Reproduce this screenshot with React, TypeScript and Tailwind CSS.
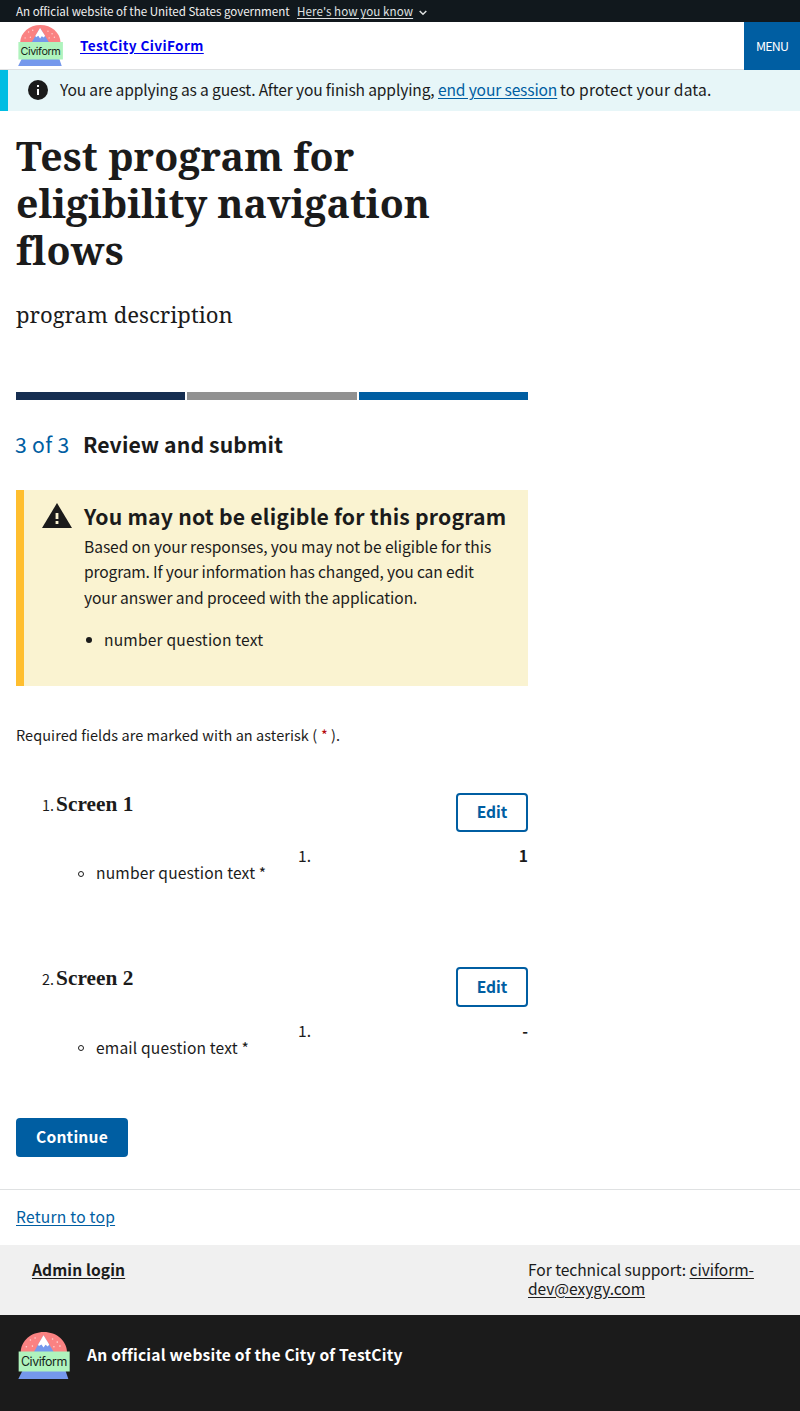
import type { ReactNode } from "react";

function Logo({ className }: { className: string }) {
  return (
    <svg className={className} viewBox="12 12 153 140" aria-label="Civiform">
      <path d="M19 72C20 38 50 12 88 12s68 26 69 60z" fill="#fa8282" />
      <g fill="#fdd5d5">
        <circle cx="48" cy="36" r="2.4" />
        <circle cx="62" cy="30" r="2.4" />
        <circle cx="36" cy="56" r="2.4" />
        <circle cx="54" cy="54" r="2.4" />
        <circle cx="114" cy="33" r="2.4" />
        <circle cx="128" cy="42" r="2.4" />
        <circle cx="136" cy="54" r="2.4" />
        <circle cx="118" cy="56" r="2.4" />
      </g>
      <path d="M87 22l31 50H58z" fill="#7598ec" />
      <path d="M87 22l17 27-4 6-7-5-6 8-6-9-8 5-2-5z" fill="#fff" />
      <path d="M24 128h129l8 24H12z" fill="#7598ec" />
      <path d="M13 70h152v60H13z" fill="#aff3bd" />
      <text
        x="89"
        y="114"
        textAnchor="middle"
        textLength="138"
        fontSize="37"
        fill="#16251a"
        fontFamily="Inter, sans-serif"
      >
        Civiform
      </text>
    </svg>
  );
}

function EditButton() {
  return (
    <button className="flex h-full w-[72px] items-center justify-center rounded-sm border-2 border-[#005ea2] pb-[1px] leading-none font-bold tracking-[-0.05px] text-[#005ea2]">
      Edit
    </button>
  );
}

function Screen({
  number,
  question,
  answer,
}: {
  number: number;
  question: ReactNode;
  answer: string;
}) {
  return (
    <li className="flex h-[174.4px] flex-col">
      <div className="flex h-[39.3px] justify-between">
        <div className="flex items-baseline pl-[26px]">
          <span className="w-[14px] text-[14.4px]">{number}.</span>
          <h3 className="font-['Liberation_Serif',serif] text-[21.3px] leading-[23px] font-bold tracking-[0.05px]">
            Screen {number}
          </h3>
        </div>
        <EditButton />
      </div>
      <div className="mt-[11.1px] flex">
        <div className="flex w-[282px] items-center pt-[17px] pl-[62px] leading-[24px]">
          <span className="mt-[3px] mr-[12px] size-[6px] rounded-full border border-[#1b1b1b]" />
          <span className="tracking-[0.16px]">{question}</span>
        </div>
        <div className="flex flex-1 justify-between leading-[24px]">
          <span>1.</span>
          <span className="font-bold">{answer}</span>
        </div>
      </div>
    </li>
  );
}

export default function App() {
  return (
    <div className="flex h-[1411px] w-[800px] flex-col bg-white font-['Noto_Sans_CJK_SC','Open_Sans',sans-serif] text-[15.6px] whitespace-nowrap text-[#1b1b1b]">
      <div className="flex h-[22px] items-center bg-[#11181d] pl-4 text-[11.6px] leading-[22px] text-[#f0f0f0]">
        <span className="w-[281px] tracking-[-0.03px]">
          An official website of the United States government
        </span>
        <span className="tracking-[0.06px] text-[#dfe1e2] underline underline-offset-2">
          Here's how you know
        </span>
        <svg className="mt-[3px] ml-1.5 h-[6px] w-[8px]" viewBox="0 0 8 6">
          <path d="M.7 1L4 4.3 7.3 1" fill="none" stroke="#dfe1e2" strokeWidth="1.5" />
        </svg>
      </div>

      <header className="flex h-[48px]">
        <div className="flex flex-1 items-center border-b border-[#dfe1e2] pl-[18px]">
          <Logo className="h-[41px] w-[45px]" />
          <a
            href="#home"
            className="mb-[2px] ml-[17px] text-[13.6px] leading-[20px] font-bold tracking-[0.38px] text-[#0000ee] underline underline-offset-2"
          >
            TestCity CiviForm
          </a>
        </div>
        <button className="flex w-[56px] items-center justify-center bg-[#005ea2] text-[12.4px] tracking-[-0.8px] text-white">
          MENU
        </button>
      </header>

      <div className="flex h-[41px] items-center border-l-8 border-[#00bde3] bg-[#e7f6f8] pb-[2px] pl-5 leading-[23px]">
        <svg className="mr-3 size-5" viewBox="0 0 20 20">
          <circle cx="10" cy="10" r="10" fill="#1b1b1b" />
          <path d="M9 5h2v2H9zM9 9h2v6H9z" fill="#fff" />
        </svg>
        <span className="w-[378px] tracking-[-0.15px]">
          You are applying as a guest. After you finish applying,
        </span>
        <a
          href="#end"
          className="w-[122px] tracking-[-0.15px] text-[#005ea2] underline underline-offset-2"
        >
          end your session
        </a>
        <span className="tracking-[0.16px]">to protect your data.</span>
      </div>

      <main className="flex h-[1078px] w-[528px] flex-col pl-4">
        <h1 className="mt-[22px] flex flex-col font-['Noto_Serif','DejaVu_Serif_Condensed',serif] text-[39.3px] leading-[47px] font-bold">
          <span className="tracking-[0.1px]">Test program for</span>
          <span className="tracking-[-0.05px]">eligibility navigation</span>
          <span className="tracking-[0.3px]">flows</span>
        </h1>
        <p className="mt-[25px] font-['Noto_Serif','DejaVu_Serif_Condensed',serif] text-[22.1px] leading-[30px]">
          program description
        </p>

        <div className="mt-[63px] grid h-2 shrink-0 grid-cols-3 gap-[2px]">
          <div className="bg-[#162e51]" />
          <div className="bg-[#919191]" />
          <div className="bg-[#005ea2]" />
        </div>

        <h2 className="mt-[28px] flex text-[21.2px] leading-[32px]">
          <span className="-ml-px w-[68px] tracking-[0.3px] text-[#005ea2]">3 of 3</span>
          <span className="font-bold tracking-[0.1px]">Review and submit</span>
        </h2>

        <section className="mt-[30px] flex h-[196px] shrink-0 border-l-8 border-[#ffbe2e] bg-[#faf3d1]">
          <svg className="mt-[13px] ml-[18px] h-[25px] w-[30px]" viewBox="0 0 30 25">
            <path d="M15 0l15 25H0z" fill="#1b1b1b" />
            <path d="M13.6 10h2.8v6h-2.8zM13.6 18h2.8v3h-2.8z" fill="#faf3d1" />
          </svg>
          <div className="ml-[12px]">
            <h3 className="mt-[10px] text-[21.2px] leading-[32px] font-bold tracking-[0.2px]">
              You may not be eligible for this program
            </h3>
            <p className="mt-[2px] flex flex-col leading-[25.4px]">
              <span className="tracking-[-0.07px]">
                Based on your responses, you may not be eligible for this
              </span>
              <span className="tracking-[-0.15px]">
                program. If your information has changed, you can edit
              </span>
              <span className="tracking-[-0.08px]">
                your answer and proceed with the application.
              </span>
            </p>
            <div className="mt-[16.4px] flex items-center leading-[25px]">
              <span className="mt-[2px] mr-[12px] ml-[2px] size-[6px] rounded-full bg-[#1b1b1b]" />
              <span className="tracking-[0.17px]">number question text</span>
            </div>
          </div>
        </section>

        <p className="mt-[37px] flex text-[14.5px] leading-6">
          <span className="w-[305px] tracking-[0.06px]">
            Required fields are marked with an asterisk (
          </span>
          <span className="w-[10px] text-[#b50909]">*</span>
          <span>).</span>
        </p>

        <ol className="mt-[46px]">
          <Screen number={1} question="number question text *" answer="1" />
          <Screen number={2} question="email question text *" answer="-" />
        </ol>

        <button className="-mt-[23.8px] flex h-[39px] w-[112px] shrink-0 items-center justify-center rounded-sm bg-[#005ea2] pb-[2px] leading-none font-bold tracking-[0.22px] text-white">
          Continue
        </button>
      </main>

      <footer className="flex flex-1 flex-col">
        <div className="h-[56px] border-t border-[#dfe1e2] pt-[14px] pl-4 leading-[25px]">
          <a href="#top" className="tracking-[0.24px] text-[#005ea2] underline underline-offset-2">
            Return to top
          </a>
        </div>
        <div className="flex h-[70px] bg-[#f0f0f0] pt-[15px] pl-8 leading-[19px]">
          <a href="#admin" className="w-[496px] font-bold tracking-[0.1px] underline underline-offset-2">
            Admin login
          </a>
          <p className="tracking-[-0.06px]">
            <span>For technical support: </span>
            <a href="#mail" className="underline underline-offset-2">
              civiform-
              <br />
              dev@exygy.com
            </a>
          </p>
        </div>
        <div className="flex flex-1 bg-[#1b1b1b] pl-[18px] text-white">
          <Logo className="mt-[17px] h-[47px] w-[52px]" />
          <span className="mt-[27px] ml-[17px] leading-[24px] font-bold tracking-[0.2px]">
            An official website of the City of TestCity
          </span>
        </div>
      </footer>
    </div>
  );
}
